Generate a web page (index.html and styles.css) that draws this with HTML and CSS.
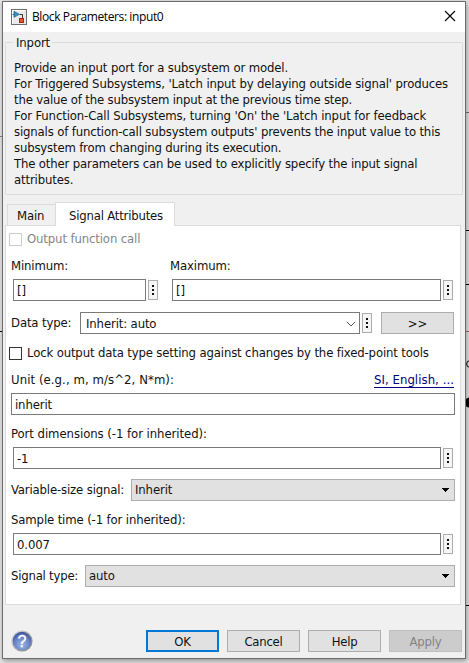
FILE: index.html
```html
<!DOCTYPE html>
<html lang="en">
<head>
<meta charset="utf-8">
<title>Block Parameters: input0</title>
<link rel="stylesheet" href="styles.css">
</head>
<body>
<svg class="canvas" width="469" height="663" viewBox="0 0 469 663" aria-hidden="true" shape-rendering="crispEdges">
  <path d="M0 136.5H3" stroke="#808080"/><path d="M0 331.5H3M465 230.5H469M465 284.5H469M465 605.5H469" stroke="#000"/>
  <path d="M465 112.5H469" stroke="#707070"/><path d="M465 331.5H469" stroke="#94686c"/>
  <g shape-rendering="auto"><circle cx="470" cy="364" r="3.4" fill="none" stroke="#000"/><circle cx="470" cy="402.500" r="5.200"/></g>
</svg>
<main class="window">
  <header class="titlebar">
    <svg class="app-icon" width="16" height="16" viewBox="0 0 16 16" aria-hidden="true">
      <rect x=".5" y=".5" width="15" height="15" fill="#e9e9e9" stroke="#6e6e6e"/>
      <path d="M1.500 14.500V1.500H14.500" fill="none" stroke="#fff"/>
      <path d="M8.500 5.500H11.500V9" fill="none" stroke="#333"/>
      <path d="M3 2.300L8.300 5.300L3 8.300Z" fill="#3494c8" stroke="#16608c" stroke-width=".7"/>
      <path d="M1.500 5.500H4" stroke="#276e98"/>
      <rect x="8.500" y="9.500" width="4" height="4" fill="#e5532b" stroke="#9c2f12"/>
    </svg>
    <h1>Block Parameters: input0</h1>
    <svg class="close" width="12" height="12" viewBox="0 0 12 12"><path d="M1 1L11 11M11 1L1 11" stroke="#000" stroke-width="1.1"/></svg>
  </header>
  <section class="group">
    <h2><span>Inport</span></h2>
    <p>Provide an input port for a subsystem or model.<br>
    <span class="t1">For Triggered Subsystems, 'Latch input by delaying outside signal' produces</span><br>
    <span class="t2">the value of the subsystem input at the previous time step.</span><br>
    <span class="t3">For Function-Call Subsystems, turning 'On' the 'Latch input for feedback</span><br>
    <span class="t4">signals of function-call subsystem outputs' prevents the input value to this</span><br>
    <span class="t2">subsystem from changing during its execution.</span><br>
    <span class="t4">The other parameters can be used to explicitly specify the input signal</span><br>
    attributes.</p>
  </section>
  <nav class="tabs"><span class="tab">Main</span><span class="tab active">Signal Attributes</span></nav>
  <section class="pane">
    <div class="check disabled"><i class="box"></i>Output function call</div>
    <div class="minmax">
      <div class="col-min">
        <label>Minimum:</label>
        <div class="row"><div class="field bracket">[]</div><b class="dots"></b></div>
      </div>
      <div class="col-max">
        <label>Maximum:</label>
        <div class="row"><div class="field bracket">[]</div><b class="dots"></b></div>
      </div>
    </div>
    <div class="row datatype">
      <label>Data type:</label>
      <div class="field editable">Inherit: auto<svg width="10" height="6" viewBox="0 0 10 6"><path d="M.8 .8L5 5L9.200 .8" fill="none" stroke="#555" stroke-width="1"/></svg></div>
      <b class="dots"></b>
      <div class="btn more">&gt;&gt;</div>
    </div>
    <div class="check lock"><i class="box"></i>Lock output data type setting against changes by the fixed-point tools</div>
    <div class="unit"><label>Unit (e.g., m, m/s^2, N*m):</label><a>SI, English, ...</a></div>
    <div class="field wide">inherit</div>
    <label class="port">Port dimensions (-1 for inherited):</label>
    <div class="row inset"><div class="field">-1</div><b class="dots"></b></div>
    <div class="row combo-row">
      <label class="t4">Variable-size signal:</label>
      <div class="combo">Inherit<svg width="7" height="4" viewBox="0 0 7 4" shape-rendering="crispEdges"><path d="M0 0H7V1H6V2H5V3H4V4H3V3H2V2H1V1H0Z"/></svg></div>
    </div>
    <label class="sample">Sample time (-1 for inherited):</label>
    <div class="row inset"><div class="field">0.007</div><b class="dots"></b></div>
    <div class="row combo-row">
      <label class="type">Signal type:</label>
      <div class="combo">auto<svg width="7" height="4" viewBox="0 0 7 4" shape-rendering="crispEdges"><path d="M0 0H7V1H6V2H5V3H4V4H3V3H2V2H1V1H0Z"/></svg></div>
    </div>
  </section>
  <footer>
    <svg class="help" width="22" height="22" viewBox="0 0 22 22" role="img">
      <defs>
        <radialGradient id="ball" cx=".5" cy=".7" r=".75"><stop offset="0" stop-color="#9db4e4"/><stop offset=".5" stop-color="#6d88c8"/><stop offset="1" stop-color="#33498c"/></radialGradient>
        <linearGradient id="rim" x2="1" y2="1"><stop offset="0" stop-color="#e8e8e8"/><stop offset="1" stop-color="#777"/></linearGradient>
      </defs>
      <circle cx="11" cy="11" r="10.600" fill="url(#rim)"/>
      <circle cx="11" cy="11" r="9.300" fill="url(#ball)"/>
      <text x="11" y="16.500" text-anchor="middle">?</text>
    </svg>
    <div class="btn primary">OK</div>
    <div class="btn">Cancel</div>
    <div class="btn">Help</div>
    <div class="btn off">Apply</div>
  </footer>
</main>
</body>
</html>
```
FILE: styles.css
```css
* { box-sizing: border-box; }
body {
  margin: 0;
  width: 469px;
  height: 663px;
  padding: 1px 0 0 2px;
  overflow: hidden;
  background: #e4e4e4;
  color: #111;
  font: 13px/16px "DejaVu Sans Condensed", "DejaVu Sans", sans-serif;
  letter-spacing: -0.13px;
  white-space: nowrap;
}
.canvas { position: absolute; left: 0; top: 0; }
.window {
  position: relative;
  width: 464px;
  height: 658px;
  border: 1px solid #6c6c6c;
  background: #f0f0f0;
  box-shadow: 1px 2px 5px rgba(0, 0, 0, .35);
}
.titlebar {
  display: flex;
  align-items: center;
  height: 30px;
  padding: 0 10px 0 8px;
  background: #fff;
}
.titlebar h1 {
  flex: 1;
  margin: 0 0 0 5px;
  font: 12px/16px "Open Sans", "Noto Sans", sans-serif;
  letter-spacing: -0.39px;
  color: #000;
}
.close { margin: 0 -1px 2px 0; }
.group {
  width: 458px;
  height: 153px;
  margin: 10px 0 0 2px;
  border: 1px solid #dcdcdc;
}
.group h2 {
  margin: -8px 0 0 7px;
  height: 16px;
  font: inherit;
}
.group h2 span { padding: 0 2px 0 3px; background: #f0f0f0; }
.group p { margin: 9px 0 0 8px; }
.t1 { letter-spacing: -0.145px; }
.t2 { letter-spacing: -0.175px; }
.t3 { letter-spacing: -0.125px; }
.t4 { letter-spacing: -0.155px; }
.tabs {
  position: relative;
  display: flex;
  align-items: flex-end;
  height: 24px;
  margin: 7px 0 -1px 4px;
}
.tab {
  height: 22px;
  width: 49px;
  padding: 3px 0 0 9px;
  border: 1px solid #dcdcdc;
}
.tab.active {
  width: 120px;
  height: 24px;
  margin-left: -1px;
  padding: 5px 0 0 13px;
  border-bottom: 0;
  background: #fff;
  letter-spacing: -0.2px;
}
.pane {
  width: 456px;
  height: 380px;
  margin-left: 2px;
  padding: 5px 5px 0;
  border: 1px solid #dcdcdc;
  background: #fff;
}
label { display: block; height: 16px; }
.row { display: flex; align-items: center; }
.check { display: flex; align-items: center; height: 16px; margin-left: -2px; }
.box { width: 13px; height: 13px; margin-right: 5px; border: 1px solid #333; background: #fff; }
.disabled { color: #858585; }
.disabled .box { border-color: #ccc; }
.field, .combo, .btn { height: 22px; line-height: 20px; border: 1px solid #7a7a7a; }
.field { flex: 1; padding: 1px 0 0 3px; background: #fff; }
.bracket { letter-spacing: 0; }
.dots {
  width: 10px;
  height: 20px;
  margin-left: 2px;
  border: 1px solid #adadad;
  background:
    linear-gradient(#111, #111) 3px 4px / 2px 2px no-repeat,
    linear-gradient(#111, #111) 3px 8px / 2px 2px no-repeat,
    linear-gradient(#111, #111) 3px 12px / 2px 2px no-repeat,
    #f5f5f5;
}
.minmax { display: flex; gap: 12px; margin-top: 11px; }
.minmax label { margin-bottom: 5px; }
.col-min { width: 147px; }
.col-min .row { padding-left: 2px; }
.col-max { width: 283px; }
.col-max .row { padding-left: 2px; }
.datatype { margin-top: 11px; }
.datatype label { width: 69px; }
.editable { flex: none; width: 280px; padding-left: 5px; }
.editable svg { float: right; margin: 7px 3px 0 0; }
.btn {
  width: 73px;
  border-color: #adadad;
  background: #e1e1e1;
  text-align: center;
  padding-top: 1px;
}
.more { margin-left: 9px; }
.lock { margin-top: 11px; letter-spacing: -0.145px; }
.unit { display: flex; justify-content: space-between; margin-top: 11px; width: 443px; }
.unit label { letter-spacing: .075px; }
.unit a { height: 16px; letter-spacing: .06px; color: #000080; border-bottom: 1px solid #000080; }
.wide { width: 444px; margin-top: 5px; }
.port { margin-top: 11px; letter-spacing: -0.06px; }
.inset { width: 442px; margin-top: 5px; padding-left: 2px; }
.inset .dots { margin-right: 0; }
.combo-row { width: 444px; margin-top: 10px; }
.combo-row label { width: 120px; }
.combo-row .type { width: 74px; letter-spacing: -0.22px; }
.combo { flex: 1; padding-left: 3px; border-color: #adadad; background: #e1e1e1; }
.combo svg { float: right; margin: 8px 5px 0 0; }
.sample { margin-top: 11px; }
footer { display: flex; gap: 8px; margin-top: 25px; padding-left: 8px; }
footer .btn { width: 73px; letter-spacing: -0.25px; }
.help { margin-right: 105px; }
.help text { font: 16px "Liberation Sans", sans-serif; fill: #fff; stroke: #fff; stroke-width: .3px; }
.primary { border: 2px solid #0078d7; line-height: 18px; }
.off { border-color: #bfbfbf; background: #ccc; color: #838383; }
```
